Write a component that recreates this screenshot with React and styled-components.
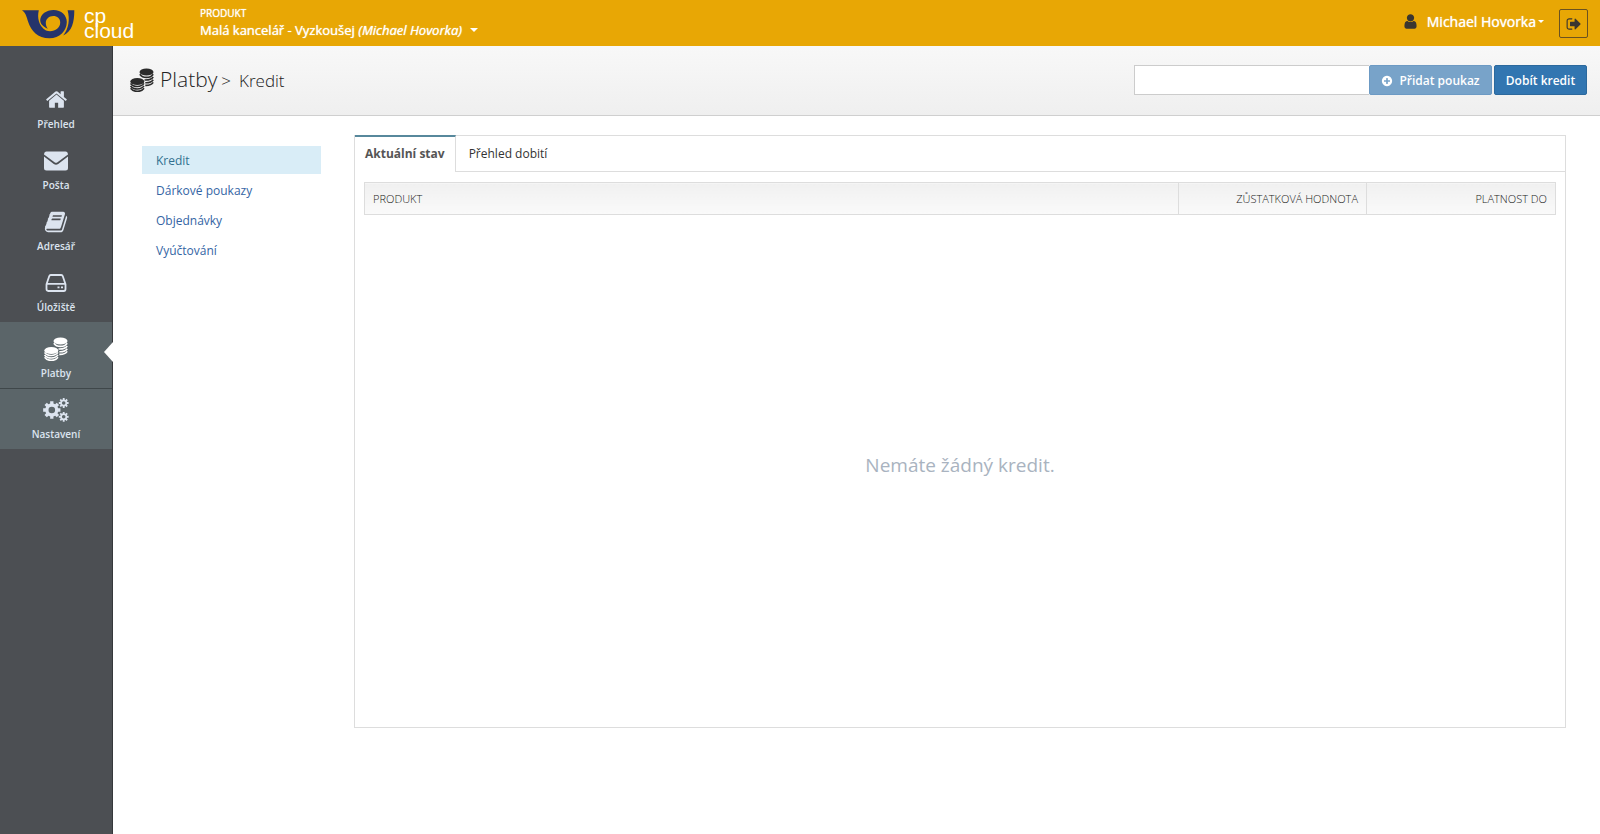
import React from "react";
import styled, { createGlobalStyle } from "styled-components";

const GlobalStyle = createGlobalStyle`
  *, *::before, *::after { box-sizing: border-box; }
  html, body, #root { height: 100%; }
  body {
    margin: 0;
    background: #fff;
    color: #333;
    font: 400 13px/20px "Open Sans", "Noto Sans", sans-serif;
  }
  h1, h2, p, ul { margin: 0; padding: 0; font-weight: inherit; }
  ul { list-style: none; }
  a { color: inherit; text-decoration: none; }
  button, input { font: inherit; margin: 0; }
`;

const Page = styled.div`
  display: flex;
  flex-direction: column;
  min-height: 100%;
`;

const TopBar = styled.header`
  display: flex;
  height: 46px;
  padding: 0 12px 0 22px;
  background: #e8a705;
  color: #fff;
`;

const Brand = styled.a`
  display: flex;
  width: 178px;
  padding-top: 8px;
`;

const BrandName = styled.span`
  display: flex;
  flex-direction: column;
  margin-left: 9px;
  font: 400 21px/15px "Liberation Sans", Arial, sans-serif;
`;

const ProductSwitch = styled.button`
  display: flex;
  flex-direction: column;
  align-items: flex-start;
  padding: 6px 0 0;
  border: 0;
  background: none;
  color: #fff;
  text-align: left;
  text-shadow: 0 0 1px #fff;
  cursor: pointer;
`;

const ProductLabel = styled.span`
  font-size: 10px;
  line-height: 15px;
`;

const ProductName = styled.span`
  display: flex;
  align-items: center;
  gap: 8px;
  font-size: 13px;
  line-height: 18px;
`;

const Caret = styled.span`
  border: solid transparent;
  border-width: ${(p) => (p.$small ? "3px 3px 0" : "4px 4px 0")};
  border-top-color: #fff;
`;

const Account = styled.div`
  display: flex;
  align-items: flex-start;
  margin-left: auto;
`;

const UserButton = styled.button`
  display: flex;
  align-items: center;
  gap: 2px;
  height: 43px;
  padding: 0;
  border: 0;
  background: none;
  color: #fff;
  font-size: 14px;
  text-shadow: 0 0 1px #fff;
  cursor: pointer;
  svg { margin-right: 6px; color: #3a3630; }
`;

const LogoutButton = styled.button`
  display: flex;
  align-items: center;
  justify-content: center;
  width: 29px;
  height: 29px;
  margin: 9px 0 0 15px;
  padding: 0;
  border: 1px solid #6b5220;
  border-radius: 2px;
  background: none;
  color: #3a3630;
  cursor: pointer;
`;

const Body = styled.div`
  display: flex;
  flex: 1;
`;

const Sidebar = styled.nav`
  flex: none;
  width: 113px;
  padding-top: 32px;
  border-right: 1px solid #36383b;
  background: #4c4f53;
`;

const SideLink = styled.a`
  position: relative;
  display: flex;
  flex-direction: column;
  align-items: center;
  justify-content: flex-end;
  gap: 2px;
  height: ${(p) => (p.$active ? 67 : p.$raised ? 60 : 61)}px;
  padding-bottom: 6px;
  border-bottom: ${(p) => (p.$active ? "1px solid #3f474a" : 0)};
  background: ${(p) => (p.$raised ? "#5b6569" : "none")};
  color: #dce4ef;
  font-size: 10px;
  font-weight: 600;
  line-height: 18px;
  svg { color: ${(p) => (p.$active ? "#fff" : "inherit")}; }
  &::after {
    content: "";
    display: ${(p) => (p.$active ? "block" : "none")};
    position: absolute;
    top: 20px;
    right: -1px;
    border: solid transparent;
    border-width: 10px 9px 10px 0;
    border-right-color: #fff;
  }
`;

const IconBox = styled.span`
  display: flex;
  align-items: center;
  justify-content: center;
  height: 27px;
`;

const Main = styled.main`
  display: flex;
  flex: 1;
  flex-direction: column;
  min-width: 0;
`;

const TitleBar = styled.div`
  display: flex;
  align-items: center;
  justify-content: space-between;
  height: 70px;
  padding: 0 13px 1px 17px;
  border-bottom: 1px solid #cfcfcf;
  background: linear-gradient(#f8f8f8, #efefef);
`;

const Title = styled.h1`
  display: flex;
  align-items: baseline;
  color: #222;
  font-size: 21px;
  font-weight: 300;
  line-height: 32px;
  svg { align-self: center; margin-right: 6px; color: #2b2b2b; }
`;

const Crumb = styled.span`
  margin-left: ${(p) => p.$gap}px;
  font-size: 17px;
`;

const VoucherForm = styled.form`
  display: flex;
`;

const VoucherInput = styled.input`
  width: 235px;
  height: 30px;
  padding: 0 8px;
  border: 1px solid #ccc;
  border-right: 0;
  border-radius: 0;
  background: #fff;
`;

const Button = styled.button`
  display: flex;
  align-items: center;
  justify-content: center;
  gap: 6px;
  width: ${(p) => p.$width}px;
  height: 30px;
  margin-left: ${(p) => (p.$muted ? 0 : 2)}px;
  padding: 1px 0 0;
  border: 1px solid ${(p) => (p.$muted ? "#6c9ac4" : "#2c699d")};
  border-radius: 2px;
  background: ${(p) => (p.$muted ? "#78a3c9" : "#3276b1")};
  color: #fff;
  font-size: 12px;
  font-weight: 600;
  cursor: pointer;
`;

const Content = styled.div`
  display: flex;
  padding: 19px 34px 20px 29px;
`;

const SubMenu = styled.ul`
  flex: none;
  display: flex;
  flex-direction: column;
  gap: 2px;
  width: 179px;
  margin: 11px 33px 0 0;
`;

const SubLink = styled.a`
  display: block;
  padding: 5px 14px 3px;
  background: ${(p) => (p.$active ? "#d9edf7" : "none")};
  color: ${(p) => (p.$active ? "#31708f" : "#3465a4")};
  font-size: 12px;
`;

const Panel = styled.section`
  display: flex;
  flex: 1;
  flex-direction: column;
  min-height: 593px;
  border: 1px solid #ddd;
`;

const Tabs = styled.div`
  display: flex;
  height: 36px;
`;

const Tab = styled.button`
  height: ${(p) => (p.$active ? 37 : 36)}px;
  margin: ${(p) => (p.$active ? "-1px 0 0" : 0)};
  padding: ${(p) => (p.$active ? "0 10px 1px" : "0 13px")};
  border: 0;
  border-top: ${(p) => (p.$active ? "2px solid #57889c" : 0)};
  border-right: ${(p) => (p.$active ? "1px solid #ddd" : 0)};
  border-bottom: ${(p) => (p.$active ? 0 : "1px solid #ddd")};
  background: #fff;
  color: ${(p) => (p.$active ? "#555" : "#333")};
  font-size: 12px;
  font-weight: ${(p) => (p.$active ? 700 : 400)};
  cursor: pointer;
`;

const TabRest = styled.div`
  flex: 1;
  border-bottom: 1px solid #ddd;
`;

const TableWrap = styled.div`
  padding: 10px 9px 0;
`;

const Table = styled.table`
  width: 100%;
  border-collapse: collapse;
  table-layout: fixed;
`;

const HeadCell = styled.th`
  width: ${(p) => (p.$width ? `${p.$width}px` : "auto")};
  height: 32px;
  padding: 0 8px;
  border: 1px solid #ddd;
  background: linear-gradient(#f0f0f0, #fafafa);
  color: #222;
  font-size: 11px;
  font-weight: 300;
  text-align: ${(p) => (p.$width ? "right" : "left")};
`;

const Empty = styled.p`
  display: flex;
  flex: 1;
  align-items: center;
  justify-content: center;
  padding-bottom: 12px;
  color: #a9b3c0;
  font-size: 19px;
  line-height: 28px;
`;

const Glyph = ({ d, size }) => (
  <svg width={size} height={size} viewBox="0 0 1792 1792" fill="currentColor" aria-hidden="true">
    <path d={d} />
  </svg>
);

const HOME =
  "M1472 992v480q0 26-19 45t-45 19h-384v-384h-256v384h-384q-26 0-45-19t-19-45v-480q0-1 .5-3t.5-3l575-474 575 474q1 2 1 6zm223-69l-62 74q-8 9-21 11h-3q-13 0-21-7l-692-577-692 577q-12 8-24 7-13-2-21-11l-62-74q-8-10-7-23.5t11-21.5l719-599q32-26 76-26t76 26l244 204v-195q0-14 9-23t23-9h192q14 0 23 9t9 23v408l219 182q10 8 11 21.5t-7 23.5z";
const BOOK =
  "M1703 478q40 57 18 129l-275 906q-19 64-76.5 107.5t-122.5 43.5h-923q-77 0-148.5-53.5t-99.5-131.5q-24-67-2-127 0-4 3-27t4-37q1-8-3-21.5t-3-19.5q2-11 8-21t16.5-23.5 16.5-23.5q23-38 45-91.5t30-91.5q3-10 .5-30t-.5-28q3-11 17-28t17-23q21-36 42-92t25-90q1-9-2.5-32t.5-28q4-13 22-30.5t22-22.5q19-26 42.5-84.5t27.5-96.5q1-8-3-25.5t-2-26.5q2-8 9-18t18-23 17-21q8-12 16.5-30.5t15-35 16-36 19.5-32 26.5-23.5 36-11.5 47.5 5.5l-1 3q38-9 51-9h761q74 0 114 56t18 130l-274 906q-36 119-71.5 153.5t-128.5 34.5h-869q-27 0-38 15-11 16-1 43 24 70 144 70h923q29 0 56-15.5t35-41.5l300-987q7-22 5-57 38 15 59 43zm-1064 2q-4 13 2 22.5t20 9.5h608q13 0 25.5-9.5t16.5-22.5l21-64q4-13-2-22.5t-20-9.5h-608q-13 0-25.5 9.5t-16.5 22.5zm-83 256q-4 13 2 22.5t20 9.5h608q13 0 25.5-9.5t16.5-22.5l21-64q4-13-2-22.5t-20-9.5h-608q-13 0-25.5 9.5t-16.5 22.5z";
const USER =
  "M1536 1399q0 109-62.5 187t-150.5 78h-854q-88 0-150.5-78t-62.5-187q0-85 8.5-160.5t31.5-152 58.5-131 94-89 134.5-34.5q131 128 313 128t313-128q76 0 134.5 34.5t94 89 58.5 131 31.5 152 8.5 160.5zm-256-887q0 159-112.5 271.5t-271.5 112.5-271.5-112.5-112.5-271.5 112.5-271.5 271.5-112.5 271.5 112.5 112.5 271.5z";
const SIGN_OUT =
  "M704 1440q0 4 1 20t.5 26.5-3 23.5-10 19.5-20.5 6.5h-320q-119 0-203.5-84.5t-84.5-203.5v-704q0-119 84.5-203.5t203.5-84.5h320q13 0 22.5 9.5t9.5 22.5q0 4 1 20t.5 26.5-3 23.5-10 19.5-20.5 6.5h-320q-66 0-113 47t-47 113v704q0 66 47 113t113 47h312l11.5 1 11.5 3 8 5.5 7 9 2 13.5zm928-544q0 26-19 45l-544 544q-19 19-45 19t-45-19-19-45v-288h-448q-26 0-45-19t-19-45v-384q0-26 19-45t45-19h448v-288q0-26 19-45t45-19 45 19l544 544q19 19 19 45z";
const PLUS =
  "M1344 960v-128q0-26-19-45t-45-19h-256v-256q0-26-19-45t-45-19h-128q-26 0-45 19t-19 45v256h-256q-26 0-45 19t-19 45v128q0 26 19 45t45 19h256v256q0 26 19 45t45 19h128q26 0 45-19t19-45v-256h256q26 0 45-19t19-45zm320-64q0 209-103 385.5t-279.5 279.5-385.5 103-385.5-103-279.5-279.5-103-385.5 103-385.5 279.5-279.5 385.5-103 385.5 103 279.5 279.5 103 385.5z";

const HornLogo = () => (
  <svg width="53" height="31" viewBox="0 0 53 31" fill="#25346b" aria-hidden="true">
    <path d="M0 2.300H16.800C15 10 16.700 18 24 22.600C31 24.800 38.200 21 38.200 14.500C38.200 10.500 35.300 8 31.200 8C27.200 8 23.800 10.900 23.800 14.800C23.800 17.200 24.500 19.200 25.800 20.700C21 18.800 18.200 15.700 18.200 12C18.600 6.200 24.300 2 31.500 2C39.500 2 44.800 7.500 44.800 14C44.800 23 37.500 30.300 27.500 30.300C15.500 30.300 9.200 22.800 6.200 14C4.500 8.500 3.500 4.500 0 2.300Z" />
    <path d="M45.600 2.300H52.300C52.300 14.500 50 23.500 41.200 27.600C46.800 20.500 48 11.500 45.600 2.300Z" />
  </svg>
);

const Envelope = () => (
  <svg width="24" height="20" viewBox="0 0 24 20" fill="currentColor" aria-hidden="true">
    <path d="M2.500 0.500H21.500Q23.800 0.500 24 3.500L13.500 11.300Q12 12.300 10.500 11.300L0 3.500Q0.200 0.500 2.500 0.500Z" />
    <path d="M0 5.500L9.800 13Q12 14.500 14.200 13L24 5.500V17Q24 19.500 21.500 19.500H2.500Q0 19.500 0 17Z" />
  </svg>
);

const Drive = () => (
  <svg width="22" height="18" viewBox="0 0 22 18" fill="none" stroke="currentColor" strokeWidth="1.800" strokeLinejoin="round" aria-hidden="true">
    <path d="M1.500 10.300L4.200 2.200Q4.600 1 5.800 1H16.200Q17.400 1 17.800 2.200L20.500 10.300V15Q20.500 17 18.800 17H3.200Q1.500 17 1.500 15ZM1.500 9.800H20.500" />
    <path d="M12.500 13.400H14.500M16 13.400H18" />
  </svg>
);

const Coins = () => (
  <svg width="24" height="24" viewBox="0 0 24 24" aria-hidden="true">
    <g fill="currentColor">
      <ellipse cx="16.500" cy="4" rx="7" ry="3.600" />
      <ellipse cx="7.300" cy="13.500" rx="7" ry="3.600" />
    </g>
    <g fill="none" stroke="currentColor" strokeWidth="1.600">
      <path d="M9.800 6.200Q12 9.400 16.500 9.400T23.200 6.200" />
      <path d="M14.500 12Q21 12.300 23.200 9" />
      <path d="M15.300 14.700Q21 15 23.200 11.700" />
      <path d="M15.300 17.400Q21 17.600 23.200 14.400" />
      <path d="M0.600 15.400Q2.800 18.500 7.300 18.500T14 15.400" />
      <path d="M0.600 17.900Q2.800 21 7.300 21T14 17.900" />
      <path d="M0.600 20.300Q2.800 23.400 7.300 23.400T14 20.300" />
    </g>
  </svg>
);

const gearPath = (cx, cy, outer, root, hole) => {
  const points = [];
  for (let i = 0; i < 8; i += 1) {
    const base = (i * Math.PI) / 4;
    [[-0.25, root], [-0.19, outer], [0.19, outer], [0.25, root]].forEach(([turn, r]) => {
      const x = cx + r * Math.cos(base + turn);
      const y = cy + r * Math.sin(base + turn);
      points.push(`${x.toFixed(2)} ${y.toFixed(2)}`);
    });
  }
  return `M${points.join("L")}ZM${cx - hole} ${cy}a${hole} ${hole} 0 1 0 ${hole * 2} 0a${hole} ${hole} 0 1 0 ${-hole * 2} 0Z`;
};

const Gears = () => (
  <svg width="26" height="24" viewBox="0 0 26 24" fill="currentColor" fillRule="evenodd" aria-hidden="true">
    <path d={gearPath(8.8, 12, 8.8, 6.6, 3.3)} />
    <path d={gearPath(20.7, 5, 5, 3.6, 1.8)} />
    <path d={gearPath(20.7, 18.8, 5, 3.6, 1.8)} />
  </svg>
);

const NAV = [
  { label: "Přehled", icon: <Glyph d={HOME} size={23} /> },
  { label: "Pošta", icon: <Envelope /> },
  { label: "Adresář", icon: <Glyph d={BOOK} size={24} /> },
  { label: "Úložiště", icon: <Drive /> },
  { label: "Platby", icon: <Coins />, active: true, raised: true },
  { label: "Nastavení", icon: <Gears />, raised: true },
];

const SECTIONS = ["Kredit", "Dárkové poukazy", "Objednávky", "Vyúčtování"];

export default function App() {
  return (
    <Page>
      <GlobalStyle />
      <TopBar>
        <Brand href="#">
          <HornLogo />
          <BrandName>
            <span>cp</span>
            <span>cloud</span>
          </BrandName>
        </Brand>
        <ProductSwitch type="button">
          <ProductLabel>PRODUKT</ProductLabel>
          <ProductName>
            <span>
              Malá kancelář - Vyzkoušej <em>(Michael Hovorka)</em>
            </span>
            <Caret />
          </ProductName>
        </ProductSwitch>
        <Account>
          <UserButton type="button">
            <Glyph d={USER} size={17} />
            Michael Hovorka
            <Caret $small />
          </UserButton>
          <LogoutButton type="button" aria-label="Odhlásit">
            <Glyph d={SIGN_OUT} size={16} />
          </LogoutButton>
        </Account>
      </TopBar>
      <Body>
        <Sidebar>
          {NAV.map((item) => (
            <SideLink key={item.label} href="#" $active={item.active} $raised={item.raised}>
              <IconBox>{item.icon}</IconBox>
              {item.label}
            </SideLink>
          ))}
        </Sidebar>
        <Main>
          <TitleBar>
            <Title>
              <Coins />
              Platby
              <Crumb $gap={4}>&gt;</Crumb>
              <Crumb $gap={8}>Kredit</Crumb>
            </Title>
            <VoucherForm>
              <VoucherInput type="text" aria-label="Kód poukazu" />
              <Button type="button" $muted $width={123}>
                <Glyph d={PLUS} size={12} />
                Přidat poukaz
              </Button>
              <Button type="button" $width={93}>
                Dobít kredit
              </Button>
            </VoucherForm>
          </TitleBar>
          <Content>
            <SubMenu>
              {SECTIONS.map((name, i) => (
                <li key={name}>
                  <SubLink href="#" $active={i === 0}>
                    {name}
                  </SubLink>
                </li>
              ))}
            </SubMenu>
            <Panel>
              <Tabs>
                <Tab type="button" $active>
                  Aktuální stav
                </Tab>
                <Tab type="button">Přehled dobití</Tab>
                <TabRest />
              </Tabs>
              <TableWrap>
                <Table>
                  <thead>
                    <tr>
                      <HeadCell scope="col">PRODUKT</HeadCell>
                      <HeadCell scope="col" $width={188}>
                        ZŮSTATKOVÁ HODNOTA
                      </HeadCell>
                      <HeadCell scope="col" $width={189}>
                        PLATNOST DO
                      </HeadCell>
                    </tr>
                  </thead>
                </Table>
              </TableWrap>
              <Empty>Nemáte žádný kredit.</Empty>
            </Panel>
          </Content>
        </Main>
      </Body>
    </Page>
  );
}
